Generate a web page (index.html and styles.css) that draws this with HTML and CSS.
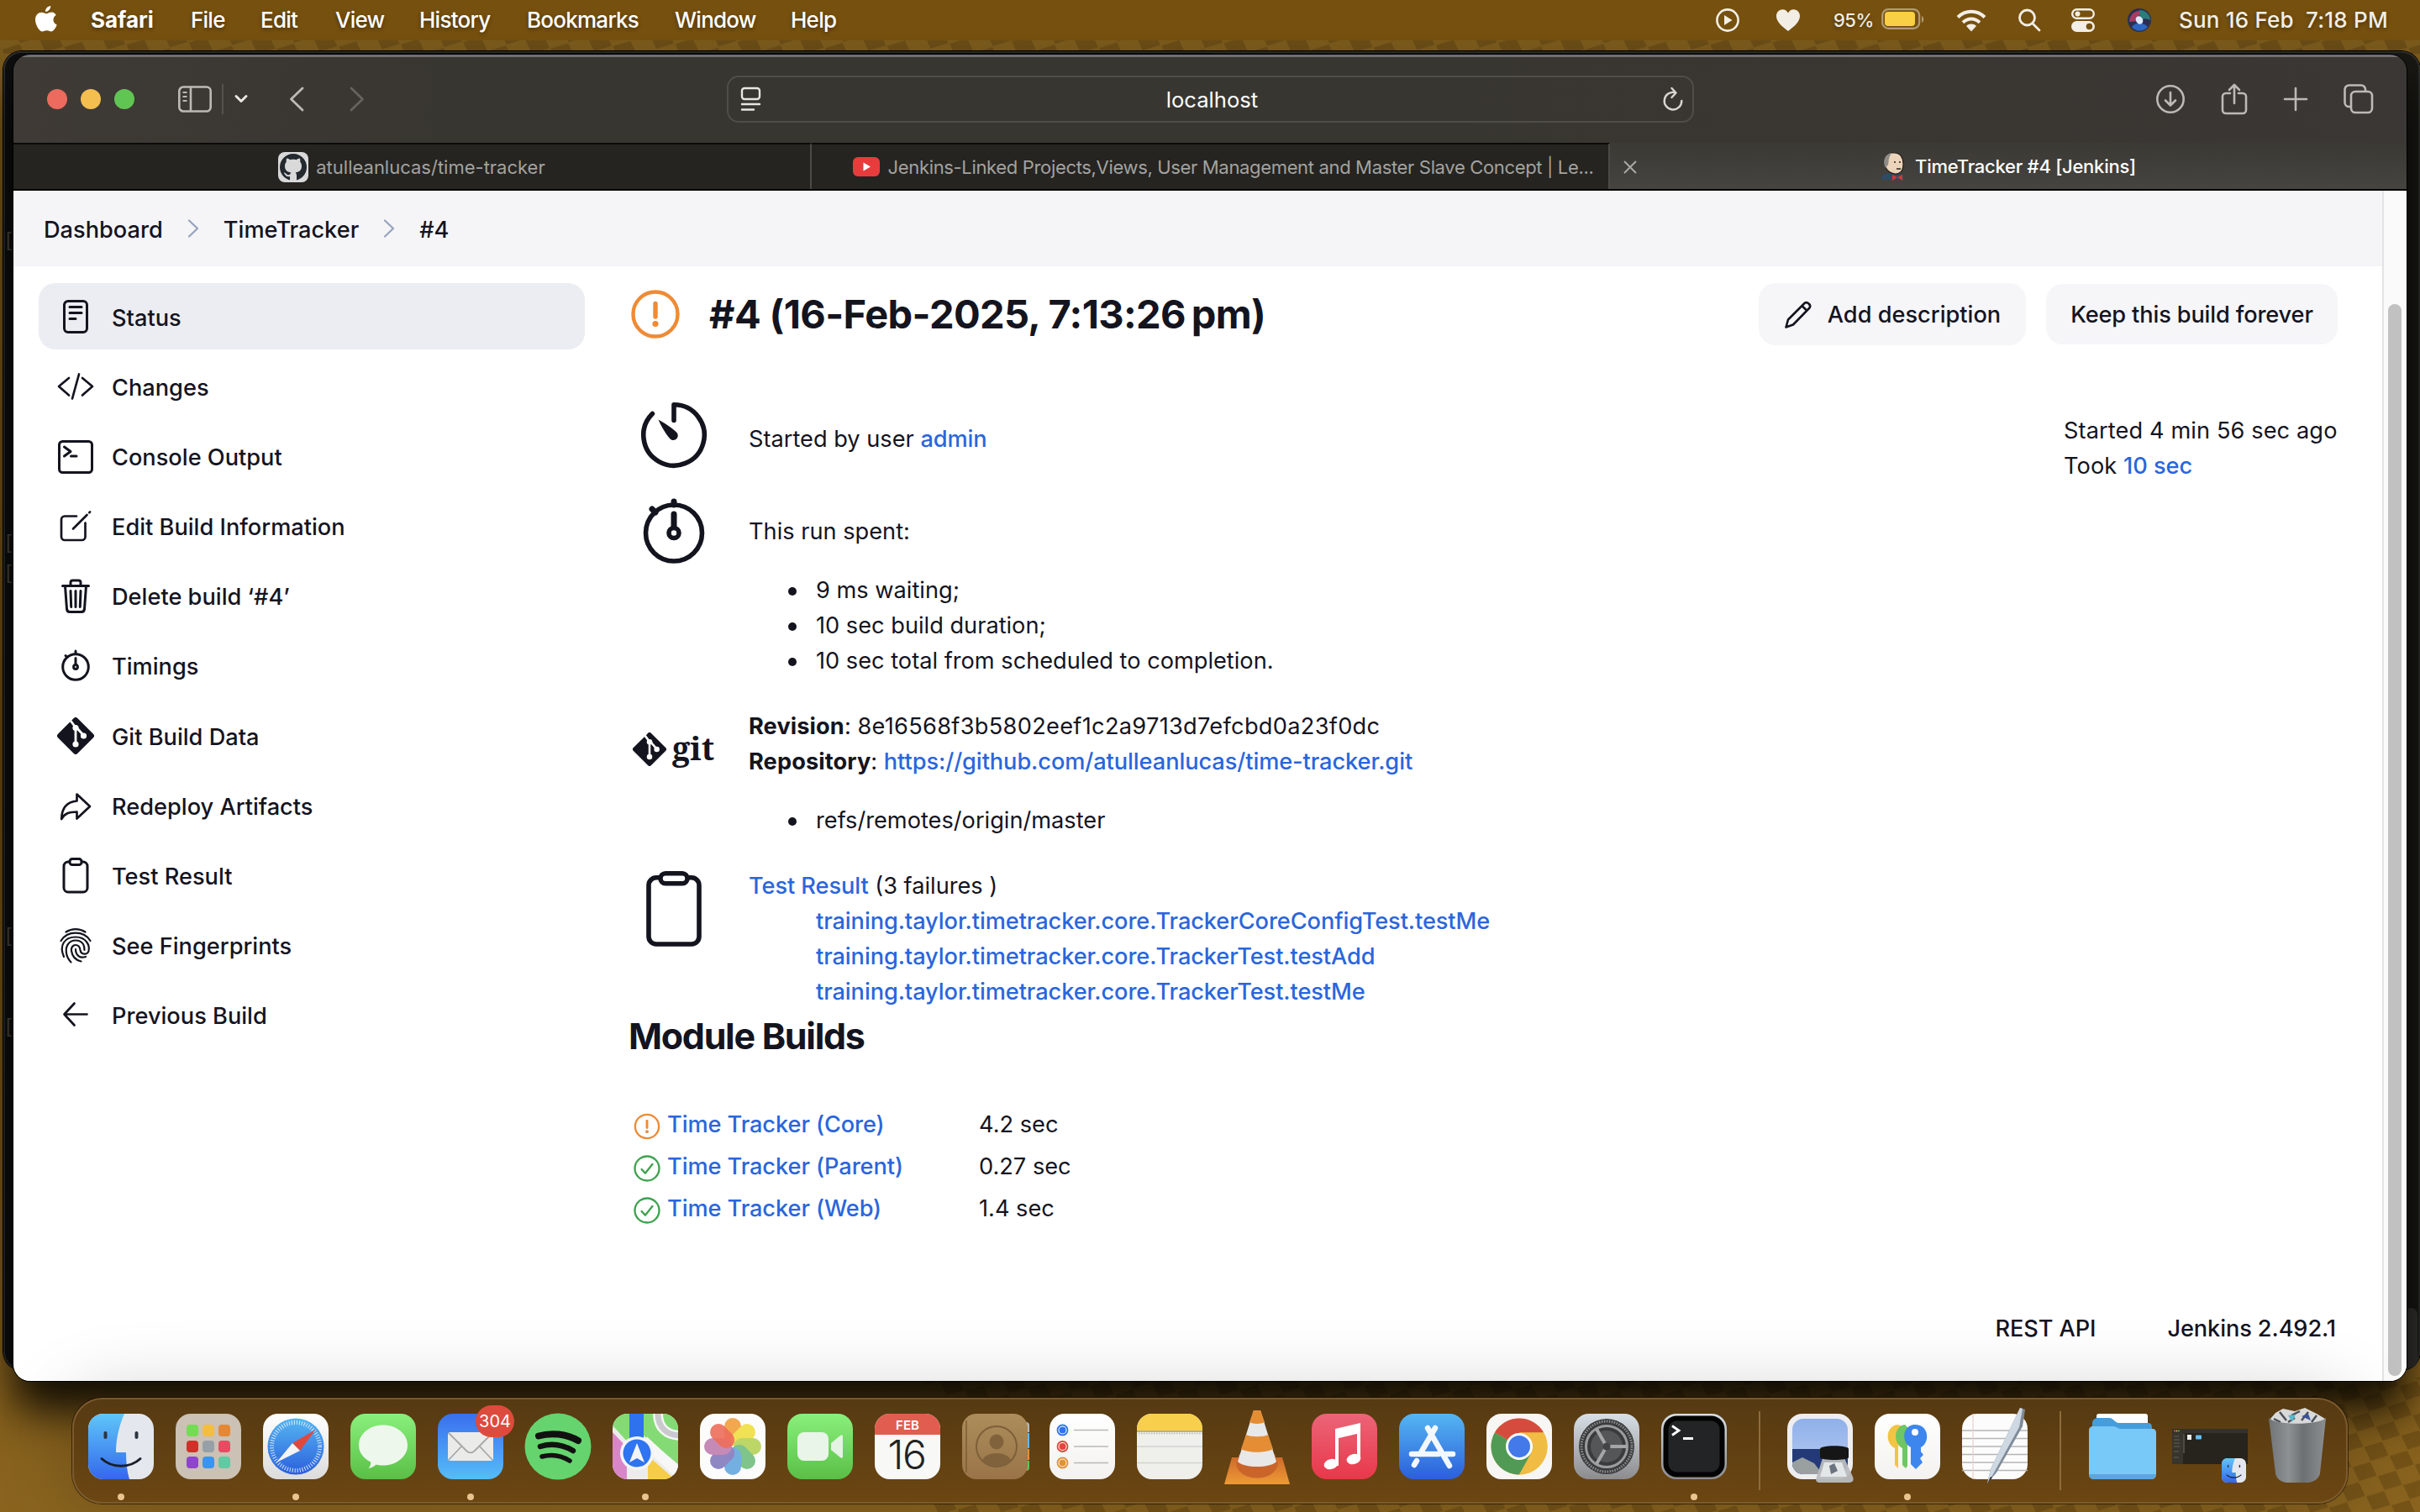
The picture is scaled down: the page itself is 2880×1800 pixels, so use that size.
FILE: index.html
```html
<!DOCTYPE html>
<html lang="en">
<head>
<meta charset="utf-8">
<title>TimeTracker #4 [Jenkins]</title>
<link rel="stylesheet" href="styles.css">
</head>
<body>
<svg class="wallpaper" viewBox="0 0 2880 1800" aria-hidden="true">
  <defs>
    <pattern id="check" width="46" height="38" patternUnits="userSpaceOnUse" patternTransform="rotate(-17) skewX(8)">
      <path d="M0 0h22v18H0zM23 19h22v18H23z" fill="#2d1c00" opacity=".22"/>
    </pattern>
    <linearGradient id="wall" x1="0" y1="0" x2="0" y2="1"><stop offset="0" stop-color="#7b5b1d"/><stop offset=".5" stop-color="#6a4a12"/><stop offset="1" stop-color="#8a641f"/></linearGradient>
    <linearGradient id="blue" x1="0" y1="0" x2="0" y2="1"><stop offset="0" stop-color="#5fc6f9"/><stop offset="1" stop-color="#3468ec"/></linearGradient>
    <linearGradient id="green" x1="0" y1="0" x2="0" y2="1"><stop offset="0" stop-color="#89f07c"/><stop offset="1" stop-color="#5abf46"/></linearGradient>
    <linearGradient id="white" x1="0" y1="0" x2="0" y2="1"><stop offset="0" stop-color="#ffffff"/><stop offset="1" stop-color="#dcdcdc"/></linearGradient>
    <linearGradient id="paper" x1="0" y1="0" x2="0" y2="1"><stop offset="0" stop-color="#ffffff"/><stop offset="1" stop-color="#f3f2f0"/></linearGradient>
    <linearGradient id="mail" x1="0" y1="0" x2="0" y2="1"><stop offset="0" stop-color="#3a6fee"/><stop offset="1" stop-color="#55bdf8"/></linearGradient>
    <linearGradient id="music" x1="0" y1="0" x2="0" y2="1"><stop offset="0" stop-color="#ec6478"/><stop offset="1" stop-color="#e8384a"/></linearGradient>
    <linearGradient id="store" x1="0" y1="0" x2="0" y2="1"><stop offset="0" stop-color="#55b6f2"/><stop offset="1" stop-color="#2b5fdc"/></linearGradient>
    <linearGradient id="steel" x1="0" y1="0" x2="0" y2="1"><stop offset="0" stop-color="#d7dfe6"/><stop offset="1" stop-color="#8c8c8e"/></linearGradient>
    <linearGradient id="bin" x1="0" y1="0" x2="1" y2="0"><stop offset="0" stop-color="#707477"/><stop offset=".35" stop-color="#8d9194"/><stop offset=".6" stop-color="#6c7073"/><stop offset="1" stop-color="#8b8f92"/></linearGradient>
    <linearGradient id="leather" x1="0" y1="0" x2="0" y2="1"><stop offset="0" stop-color="#ac8d5b"/><stop offset="1" stop-color="#9a7448"/></linearGradient>
    <linearGradient id="cone" x1="0" y1="0" x2="0" y2="1"><stop offset="0" stop-color="#cf6b2c"/><stop offset="1" stop-color="#ee9a36"/></linearGradient>
    <linearGradient id="sky" x1="0" y1="0" x2="0" y2="1"><stop offset="0" stop-color="#8fb0ea"/><stop offset="1" stop-color="#b9ccf1"/></linearGradient>
    <clipPath id="tile"><rect x="0" y="0" width="78" height="78" rx="18"/></clipPath>
    <symbol id="finder" viewBox="0 0 78 78">
      <g clip-path="url(#tile)"><path fill="#e4e8ee" d="M0 0h78v78H0z"/><path fill="url(#blue)" d="M0 0h43C36 16 33 32 33 46h12c0 12 1 22 4 32H0z"/></g>
      <path d="M20.500 23v5M57.500 23v5" stroke="#2b3440" stroke-width="4" stroke-linecap="round"/>
      <path d="M16 53.500c12 11.500 34 11.500 46 0" fill="none" stroke="#1b1f2a" stroke-width="3" stroke-linecap="round"/>
    </symbol>
    <symbol id="gitmark" viewBox="0 0 44 44">
      <path fill="#14141f" d="M19.800 1a3 3 0 0 1 4.400 0L43 19.800a3 3 0 0 1 0 4.400L24.200 43a3 3 0 0 1-4.400 0L1 24.200a3 3 0 0 1 0-4.400z"/>
      <path d="M16 4l6 8v21M23 12l8.500 9.500" fill="none" stroke="#fff" stroke-width="2.800"/>
      <circle cx="22" cy="12.500" r="3.600" fill="#fff"/><circle cx="22" cy="32" r="3.600" fill="#fff"/><circle cx="31.500" cy="22" r="3.600" fill="#fff"/>
    </symbol>
    <symbol id="okay" viewBox="0 0 30 30"><circle cx="15" cy="15" r="13.600" fill="none" stroke="#3fa24f" stroke-width="2.200"/><path d="M9 16l4 4.300 8-10" fill="none" stroke="#3fa24f" stroke-width="2.200" stroke-linecap="round" stroke-linejoin="round"/></symbol>
    <symbol id="warn" viewBox="0 0 60 60"><circle cx="30" cy="30" r="26.500" fill="none" stroke="#ee8b36" stroke-width="4.400"/><path d="M30 17.500v15.500" stroke="#ee8b36" stroke-width="5.400" stroke-linecap="round"/><circle cx="30" cy="41.500" r="3.600" fill="#ee8b36"/></symbol>
  </defs>
  <rect width="2880" height="1800" fill="url(#wall)"/>
  <rect y="48" width="2880" height="16" fill="url(#check)"/>
  <rect x="1100" y="1640" width="1780" height="160" fill="url(#check)"/>
</svg>

<header class="menubar">
  <nav class="menus">
    <svg width="28" height="32" viewBox="0 0 28 32"><path fill="#fff" d="M19.300 0c.3 3.600-3 7-6.300 7-.4-3.400 3-6.900 6.300-7zM25.700 11c-4.800 3-4 9.400 1 11.600-1.200 3.600-4 7.900-6.800 7.900-2 0-2.700-1.200-5.200-1.200s-3.300 1.200-5.200 1.200C5.700 30.500 1 22.500 1 16.500 1 10.800 4.700 7.700 8.500 7.700c2.400 0 4.300 1.600 5.800 1.600 1.400 0 3.600-1.700 6.500-1.700 1.900 0 3.800 1.200 4.900 3.400z"/></svg>
    <b>Safari</b><span>File</span><span>Edit</span><span>View</span><span>History</span><span>Bookmarks</span><span>Window</span><span>Help</span>
  </nav>
  <div class="extras">
    <svg width="30" height="30" viewBox="0 0 30 30"><circle cx="15" cy="15" r="12.600" fill="none" stroke="#f2eee6" stroke-width="2.600"/><path d="M11 9l9.500 6L11 21z" fill="#f2eee6"/></svg>
    <svg width="30" height="28" viewBox="0 0 30 28"><path fill="#f2eee6" d="M15 27C7 21 1 15.500 1 9c0-8 10.500-11 14-3.500C18.500-2 29 1 29 9c0 6.500-6 12-14 18z"/></svg>
    <span class="pct">95%</span>
    <svg width="52" height="26" viewBox="0 0 52 26"><rect x="1.200" y="1.200" width="44" height="22.600" rx="7" fill="none" stroke="#b09c78" stroke-width="2.200"/><rect x="4" y="4" width="36" height="17" rx="4" fill="#f8cf45"/><path d="M48 9c3 1.500 3 6.500 0 8z" fill="#b09c78"/></svg>
    <svg width="36" height="28" viewBox="0 0 36 28"><g fill="none" stroke="#f2eee6" stroke-width="4"><path d="M2 10.500c9-9 23-9 32 0"/><path d="M8 16.800c6-5.600 14-5.600 20 0"/></g><path fill="#f2eee6" d="M12 21c3.500-3.200 8.500-3.200 12 0l-6 6.500z"/></svg>
    <svg width="28" height="28" viewBox="0 0 28 28"><g fill="none" stroke="#f2eee6" stroke-width="2.800" stroke-linecap="round"><circle cx="11.500" cy="11" r="9"/><path d="M18 18l8 8"/></g></svg>
    <svg width="30" height="28" viewBox="0 0 30 28"><rect x="2.200" y="1.200" width="25.600" height="10.600" rx="5.300" fill="none" stroke="#f2eee6" stroke-width="2.400"/><circle cx="8.500" cy="6.500" r="3" fill="#f2eee6"/><rect x="1" y="15" width="28" height="13" rx="6.500" fill="#f2eee6"/><circle cx="22.500" cy="21.500" r="3.800" fill="#76500e"/></svg>
    <svg width="30" height="28" viewBox="0 0 30 28"><circle cx="15" cy="14" r="14" fill="#2a2f52"/><path d="M3 16C4 4 14 1 20 4c-8 3-6 10-5 11z" fill="#a63c62"/><path d="M15 2c8 0 13 6 13 12-4-2-8-3-12 1z" fill="#2d7c7c"/><path d="M6 22c4-6 14-6 19 0-5 6-14 6-19 0z" fill="#2c66c0"/><ellipse cx="15" cy="14" rx="4" ry="5" fill="#dfeafc" transform="rotate(-30 15 14)"/></svg>
    <span class="clock">Sun 16 Feb&nbsp; 7:18 PM</span>
  </div>
</header>

<main class="desktop">
  <div class="backwindow">
    <span class="frag f1">[</span><span class="frag f2">[</span><span class="frag f3">[</span><span class="frag f4">[</span><span class="frag f5">[</span>
    <div class="backthumb"></div>
  </div>

  <section class="window">
    <div class="toolbar">
      <div class="lights"><i class="red"></i><i class="amber"></i><i class="lime"></i></div>
      <div class="tools-left">
        <svg width="40" height="32" viewBox="0 0 40 32" fill="none" stroke="#bcbab6" stroke-width="2.600"><rect x="1.300" y="1.500" width="37.400" height="29" rx="5"/><path d="M15 1.500v29"/><path d="M5.500 8h5M5.500 13h5M5.500 18h5" stroke-width="2"/></svg>
        <i class="rule"></i>
        <svg width="18" height="12" viewBox="0 0 18 12" fill="none" stroke="#e8e6e2" stroke-width="3" stroke-linecap="round" stroke-linejoin="round"><path d="M3 2.500l6 6 6-6"/></svg>
        <svg class="back" width="18" height="30" viewBox="0 0 18 30" fill="none" stroke="#bcbab6" stroke-width="2.800" stroke-linecap="round" stroke-linejoin="round"><path d="M16 2L2.500 15 16 28"/></svg>
        <svg class="fwd" width="18" height="30" viewBox="0 0 18 30" fill="none" stroke="#65635f" stroke-width="2.800" stroke-linecap="round" stroke-linejoin="round"><path d="M2 2l13.500 13L2 28"/></svg>
      </div>
      <div class="url">
        <svg width="26" height="30" viewBox="0 0 26 30" fill="none" stroke="#e8e6e2" stroke-width="2.400" stroke-linecap="round"><rect x="2" y="2" width="21" height="13" rx="3"/><path d="M2 21h21M2 27.500h14"/></svg>
        <span>localhost</span>
        <svg width="26" height="30" viewBox="0 0 26 30" fill="none" stroke="#d8d6d2" stroke-width="2.400" stroke-linecap="round" stroke-linejoin="round"><path d="M15.500 7.200A10.300 10.300 0 1 0 23.300 17M11.500 2l5 5.500-5 5.500"/></svg>
      </div>
      <div class="tools-right">
        <svg width="36" height="36" viewBox="0 0 36 36" fill="none" stroke="#bcbab6" stroke-width="2.600" stroke-linecap="round" stroke-linejoin="round"><circle cx="18" cy="18" r="15.700"/><path d="M18 10v15.500M12 19.500l6 6 6-6"/></svg>
        <svg width="32" height="38" viewBox="0 0 32 38" fill="none" stroke="#bcbab6" stroke-width="2.600" stroke-linecap="round" stroke-linejoin="round"><path d="M11 12H6a4 4 0 0 0-4 4v16a4 4 0 0 0 4 4h20a4 4 0 0 0 4-4V16a4 4 0 0 0-4-4h-5M16 24V2M10 8l6-6 6 6"/></svg>
        <svg width="30" height="30" viewBox="0 0 30 30" stroke="#bcbab6" stroke-width="2.600" stroke-linecap="round"><path d="M15 2v26M2 15h26"/></svg>
        <svg width="36" height="36" viewBox="0 0 36 36" fill="none" stroke="#bcbab6" stroke-width="2.600" stroke-linejoin="round"><rect x="9" y="9" width="25" height="25" rx="5"/><path d="M9 27H6.500a5 5 0 0 1-5-5V6.500a5 5 0 0 1 5-5H21a5 5 0 0 1 5 5V9"/></svg>
      </div>
    </div>

    <div class="tabs">
      <div class="tab">
        <svg width="36" height="36" viewBox="0 0 36 36"><rect width="36" height="36" rx="8" fill="#d9d9da"/><circle cx="18" cy="18" r="16" fill="#24292f"/><path fill="#d9d9da" d="M14 34v-5c-4 1-5-1-6-2.500-.5-1-2-1.500-1-2 2-.3 3 2.500 4.500 2.700 1 .2 2 0 2.600-.4.200-1.200.7-2 1.300-2.400-5-.7-7.400-3-7.400-7.700 0-2 .6-3.600 1.800-4.900-.3-1.500-.2-3 .3-4.300 1.700 0 3.200 1 4.300 1.800 2.400-.6 4.800-.6 7.200 0 1.100-.8 2.600-1.800 4.300-1.800.5 1.300.6 2.800.3 4.300 1.200 1.300 1.800 3 1.800 4.900 0 4.700-2.400 7-7.400 7.700 1 .7 1.400 2 1.400 3.600v6z"/></svg>
        <span class="gh">atulleanlucas/time-tracker</span>
      </div>
      <div class="tab second">
        <svg width="32" height="23" viewBox="0 0 32 23"><rect width="32" height="23" rx="6" fill="#e83c3c"/><path d="M12.500 6.500l8.500 5-8.500 5z" fill="#fff"/></svg>
        <span class="yt">Jenkins-Linked Projects,Views, User Management and Master Slave Concept | Le...</span>
      </div>
      <div class="tab active">
        <svg class="close" width="16" height="16" viewBox="0 0 16 16" stroke="#aaa8a4" stroke-width="2"><path d="M1 1l14 14M15 1L1 15"/></svg>
        <svg width="30" height="34" viewBox="0 0 30 34"><path d="M1 33c-1-5 2-7 8-8h12c5 1 8 3 7 8z" fill="#2f4a63"/><path d="M6 18C2 8 8 0 16 1c8 0 11 6 11 13 0 9-4 12-9 12S8 23 6 18z" fill="#ebd4ba" stroke="#2b211c" stroke-width="1.200"/><path d="M6 19C1 9 7 1 14 1 9 5 10 11 9 15z" fill="#8f8b88"/><path d="M16 12h2M22 12h2M19 20h5" stroke="#2b211c" stroke-width="1.500"/><path d="M14 27l6 3-6 4zM26 27l-6 3 6 4z" fill="#d33833"/></svg>
        <b class="jk">TimeTracker #4 [Jenkins]</b>
      </div>
    </div>

    <div class="page">
      <div class="view">
        <nav class="crumbs">
          <span>Dashboard</span>
          <svg width="14" height="22" viewBox="0 0 14 22" fill="none" stroke="#99a5be" stroke-width="2.400" stroke-linecap="round" stroke-linejoin="round"><path d="M2 1.500L12 11 2 20.500"/></svg>
          <span>TimeTracker</span>
          <svg width="14" height="22" viewBox="0 0 14 22" fill="none" stroke="#99a5be" stroke-width="2.400" stroke-linecap="round" stroke-linejoin="round"><path d="M2 1.500L12 11 2 20.500"/></svg>
          <span>#4</span>
        </nav>
        <div class="columns">
          <aside class="side">
            <a class="item on"><svg class="ic" viewBox="0 0 44 44"><rect x="8.500" y="3.500" width="27" height="37" rx="4.500"/><path d="M15 10.500h14M15 17.500h14M15 24.500h7"/></svg><span>Status</span></a>
            <a class="item"><svg class="ic thin" viewBox="0 0 44 44"><path d="M14 12L2 22l12 10.500M30 12l12 10-12 10.500M26 7.500l-8 29"/></svg><span>Changes</span></a>
            <a class="item"><svg class="ic" viewBox="0 0 44 44"><rect x="2.500" y="4.500" width="39" height="37" rx="4"/><path d="M8.500 11l7.500 5.500-7.500 5.500M16.500 22h6.500"/></svg><span>Console Output</span></a>
            <a class="item"><svg class="ic thin" viewBox="0 0 44 44"><path d="M23 10.500H9a4 4 0 0 0-4 4V35a4 4 0 0 0 4 4h20.500a4 4 0 0 0 4-4V18.500M19 25.500L35.500 9M38.300 6.200l.8-.8"/></svg><span>Edit Build Information</span></a>
            <a class="item"><svg class="ic" viewBox="0 0 44 44"><path d="M6.500 10.500h31M9.500 10.500l2 27.500c.2 2 1.500 3.500 3.500 3.500h14c2 0 3.300-1.500 3.500-3.500l2-27.500M16 10V6.500c0-1.500 1-2.500 2.500-2.500h7c1.500 0 2.500 1 2.500 2.500V10M16 16.500l.7 19M22 16.500v19M28 16.500l-.7 19"/></svg><span>Delete build ‘#4’</span></a>
            <a class="item"><svg class="ic" viewBox="0 0 44 44"><circle cx="22" cy="24" r="15.300"/><path d="M22 13.500v7.500M22 5v3M10 10.500l2 2"/><circle cx="22" cy="24" r="2.400"/></svg><span>Timings</span></a>
            <a class="item"><svg class="ic solid" viewBox="0 0 44 44"><use href="#gitmark"/></svg><span>Git Build Data</span></a>
            <a class="item"><svg class="ic thin" viewBox="0 0 44 44"><path d="M23.500 8.500L39 23 23.500 37.500v-8C14 29.500 9 31.500 5.200 38 5.500 25 12 17.500 23.500 16.500z"/></svg><span>Redeploy Artifacts</span></a>
            <a class="item"><svg class="ic" viewBox="0 0 44 44"><path d="M14.500 6H13a5 5 0 0 0-5 5v26a5 5 0 0 0 5 5h18a5 5 0 0 0 5-5V11a5 5 0 0 0-5-5h-1.500"/><rect x="15" y="2.500" width="14" height="7" rx="3"/></svg><span>Test Result</span></a>
            <a class="item"><svg class="ic fine" viewBox="0 0 44 44"><path d="M10.500 6.500c7-4.500 16-4.500 23 0M4.500 17C12 4.500 32 4.500 39.500 17M8 36C2 22 9 12.500 22 12.500S39 23 37.500 29c-1.500 5-9 5-10-1-.5-4-2-6-5.500-6s-5.500 3-5 7c1 7 5 11 11.500 12.500M16.500 42.500C9 35 10 25 13 21c4-6 14-6 18 0 1.500 2.500 1.500 4 1.500 7M34 36c-7 2.500-12-2-12-9"/></svg><span>See Fingerprints</span></a>
            <a class="item"><svg class="ic thin" viewBox="0 0 44 44"><path d="M20.500 8.500L8.500 21.500l12 13M8.500 21.500H35.500"/></svg><span>Previous Build</span></a>
          </aside>

          <article class="main">
            <div class="headline">
              <svg width="60" height="60"><use href="#warn"/></svg>
              <h1>#4 (16-Feb-2025, 7:13:26&#8239;pm)</h1>
              <button class="btn edit"><svg width="34" height="34" viewBox="0 0 34 34" fill="none" stroke="#14141f" stroke-width="2.600" stroke-linejoin="round"><path d="M2.500 31.500l2.500-9L24.500 3c3-2.500 8.500 2 6 5.500L11 28.500zM21.500 6l6.500 6.500"/></svg><span>Add description</span></button>
              <button class="btn keep"><span>Keep this build forever</span></button>
            </div>

            <div class="row cause">
              <svg width="80" height="80" viewBox="0 0 80 80" fill="none" stroke="#14141f" stroke-width="5.600" stroke-linecap="round" stroke-linejoin="round"><path d="M14.400 14.400A36.200 36.200 0 1 0 40 3.800V22.500"/><path fill="#14141f" stroke="none" d="M21.500 21.500c8 4.500 16.500 10 22 15.500 4 5.500-2.500 12-8 7.500-5-5.500-10.500-14.500-14-23z"/></svg>
              <p>Started by user <a>admin</a></p>
              <p class="when">Started 4 min 56 sec ago<br>Took <a>10 sec</a></p>
            </div>
            <div class="row">
              <svg width="80" height="80" viewBox="0 0 80 80" fill="none" stroke="#14141f" stroke-width="5.600" stroke-linecap="round"><circle cx="40" cy="42.500" r="33.500"/><path d="M40 20v15M40 5v4M14 14l4 4" stroke-width="7"/><circle cx="40" cy="42.500" r="6"/></svg>
              <div><p>This run spent:</p>
                <ul><li>9 ms waiting;</li><li>10 sec build duration;</li><li>10 sec total from scheduled to completion.</li></ul></div>
            </div>
            <div class="row">
              <div class="gitlogo"><svg width="40" height="40"><use href="#gitmark"/></svg><b>git</b></div>
              <div><p><b class="key">Revision</b>: <span class="hash">8e16568f3b5802eef1c2a9713d7efcbd0a23f0dc</span></p>
                <p><b class="key">Repository</b>: <a>https://github.com/atulleanlucas/time-tracker.git</a></p>
                <ul><li>refs/remotes/origin/master</li></ul></div>
            </div>
            <div class="row testrow">
              <svg width="68" height="92" viewBox="0 0 68 92" fill="none" stroke="#14141f" stroke-width="5.600"><path d="M17 8.800H13a9 9 0 0 0-9 9V79a9 9 0 0 0 9 9h42a9 9 0 0 0 9-9V17.800a9 9 0 0 0-9-9h-4"/><rect x="18" y="3.800" width="32" height="12" rx="6"/></svg>
              <div><p><a>Test Result</a> (3 failures )</p>
                <p class="fails"><a>training.taylor.timetracker.core.TrackerCoreConfigTest.testMe</a><br><a>training.taylor.timetracker.core.TrackerTest.testAdd</a><br><a>training.taylor.timetracker.core.TrackerTest.testMe</a></p></div>
            </div>

            <h2>Module Builds</h2>
            <div class="modules">
              <svg width="32" height="32"><use href="#warn"/></svg><a>Time Tracker (Core)</a><span>4.2 sec</span>
              <svg width="32" height="32"><use href="#okay"/></svg><a>Time Tracker (Parent)</a><span>0.27 sec</span>
              <svg width="32" height="32"><use href="#okay"/></svg><a>Time Tracker (Web)</a><span>1.4 sec</span>
            </div>
            <footer><span>REST API</span><span>Jenkins 2.492.1</span></footer>
          </article>
        </div>
      </div>
      <div class="scroll"><i></i></div>
    </div>
  </section>
</main>

<div class="dock">
  <div class="app run"><svg viewBox="0 0 78 78"><use href="#finder"/></svg></div>
  <div class="app"><svg viewBox="0 0 78 78"><rect width="78" height="78" rx="18" fill="#cbc1b4"/><g><rect x="13" y="13" width="14" height="14" rx="4" fill="#74dc53"/><rect x="32" y="13" width="14" height="14" rx="4" fill="#f2bd42"/><rect x="51" y="13" width="14" height="14" rx="4" fill="#e58836"/><rect x="13" y="32" width="14" height="14" rx="4" fill="#cf3128"/><rect x="32" y="32" width="14" height="14" rx="4" fill="#96a0a6"/><rect x="51" y="32" width="14" height="14" rx="4" fill="#e94a62"/><rect x="13" y="51" width="14" height="14" rx="4" fill="#8f44cc"/><rect x="32" y="51" width="14" height="14" rx="4" fill="#3d93f0"/><rect x="51" y="51" width="14" height="14" rx="4" fill="#62c9a2"/></g></svg></div>
  <div class="app run"><svg viewBox="0 0 78 78"><rect width="78" height="78" rx="18" fill="url(#white)"/><circle cx="39" cy="39" r="33.500" fill="url(#store)"/><circle cx="39" cy="39" r="28.500" fill="none" stroke="#d6e8fb" stroke-width="5" stroke-dasharray="1 2"/><path d="M62.500 19L44 44l-9-9z" fill="#e0483d"/><path d="M16 58l19-23 9 9z" fill="#f4f4f4"/></svg></div>
  <div class="app"><svg viewBox="0 0 78 78"><rect width="78" height="78" rx="18" fill="url(#green)"/><path fill="#eef7ec" d="M39 13.500c16 0 29 10.500 29 24s-13 24-29 24c-3 0-6-.3-8.500-1-2 2-5 4-9 4.500 2-2.500 3-5 2.600-7.500C15.500 53 10 46 10 37.500c0-13.500 13-24 29-24z"/></svg></div>
  <div class="app run"><svg viewBox="0 0 78 78"><rect width="78" height="78" rx="18" fill="url(#mail)"/><rect x="12" y="22" width="54" height="34" rx="3" fill="#ebebea"/><path d="M13 23l21 21c3 3 7 3 10 0l21-21M13 55l15-16M65 55L50 39" fill="none" stroke="#a8a8a8" stroke-width="1.800"/></svg><b class="badge">304</b></div>
  <div class="app"><svg viewBox="0 0 78 78"><circle cx="39" cy="39" r="39.500" fill="#65d46e"/><g fill="none" stroke="#111" stroke-linecap="round"><path d="M16 26.500c15-4.500 33-2.500 47 5.500" stroke-width="8"/><path d="M18 39c13-4 27-2 39 5" stroke-width="6.500"/><path d="M20 51c11-3 22-2 33 5" stroke-width="5.500"/></g></svg></div>
  <div class="app run"><svg viewBox="0 0 78 78"><g clip-path="url(#tile)"><path fill="#ececec" d="M0 0h78v78H0z"/><path fill="#84db75" d="M0 0h20v36L0 14zM37 0h41v60L37 26z"/><path fill="#d986c9" d="M0 22l17 18v38H0z"/><path fill="#f5cd47" d="M42 78V50l32 28z"/><path d="M37 32l41 38M54 0c0 16 10 26 28 26" stroke="#f7f7f7" stroke-width="12" fill="none"/><path d="M54 0c0 16 10 26 28 26" stroke="#c9c9ce" stroke-width="7" fill="none"/><path fill="#2f72ee" d="M20 0h17v46H20z"/></g><circle cx="29" cy="47" r="20" fill="#f3f5f8"/><circle cx="29" cy="47" r="16.500" fill="#2f74f0"/><path d="M29 35l9 23-9-5-9 5z" fill="#f5f5f5"/></svg></div>
  <div class="app"><svg viewBox="0 0 78 78"><rect width="78" height="78" rx="18" fill="#fcfcfc"/><g opacity=".88"><rect x="29" y="5" width="20" height="33" rx="10" fill="#f19d38"/><rect x="29" y="5" width="20" height="33" rx="10" fill="#f0de3f" transform="rotate(45 39 39)"/><rect x="29" y="5" width="20" height="33" rx="10" fill="#b5d154" transform="rotate(90 39 39)"/><rect x="29" y="5" width="20" height="33" rx="10" fill="#6dbd7c" transform="rotate(135 39 39)"/><rect x="29" y="5" width="20" height="33" rx="10" fill="#62a5de" transform="rotate(180 39 39)"/><rect x="29" y="5" width="20" height="33" rx="10" fill="#8078bd" transform="rotate(225 39 39)"/><rect x="29" y="5" width="20" height="33" rx="10" fill="#bf7bae" transform="rotate(270 39 39)"/><rect x="29" y="5" width="20" height="33" rx="10" fill="#ec5a45" transform="rotate(315 39 39)" opacity=".9"/></g></svg></div>
  <div class="app"><svg viewBox="0 0 78 78"><rect width="78" height="78" rx="18" fill="url(#green)"/><rect x="12" y="22" width="37" height="34" rx="8" fill="#e9f5e8"/><path d="M52 35l11-9c2-1.500 3-.5 3 1v24c0 1.500-1 2.500-3 1l-11-9z" fill="#e4f3e2"/></svg></div>
  <div class="app"><svg viewBox="0 0 78 78"><g clip-path="url(#tile)"><path fill="#f8f8f7" d="M0 0h78v78H0z"/><path fill="#e05d50" d="M0 0h78v25H0z"/></g><text x="39" y="18.500" text-anchor="middle" font-size="15" font-weight="600" fill="#fff">FEB</text><text x="38" y="66" text-anchor="middle" font-size="48" font-weight="300" letter-spacing="-1.500" fill="#222">16</text></svg></div>
  <div class="app"><svg viewBox="0 0 78 78"><path d="M74 10h2a4 4 0 0 1 4 4v8h-6z" fill="#b8b8b8"/><path d="M74 23h6v18h-6z" fill="#62b7ea"/><path d="M74 42h6v13h-6z" fill="#e28f36"/><path d="M74 56h6v8a4 4 0 0 1-4 4h-2z" fill="#62c15a"/><rect width="78" height="78" rx="17" fill="url(#leather)"/><path d="M5 8v62" stroke="#7d5c32" stroke-width="1.500"/><circle cx="41" cy="39" r="24" fill="none" stroke="#7d5f39" stroke-width="2"/><ellipse cx="41" cy="33.500" rx="8.500" ry="9" fill="#80623c"/><path d="M24 56c3-12 31-12 34 0-8 9-26 9-34 0z" fill="#80623c"/></svg></div>
  <div class="app"><svg viewBox="0 0 78 78"><rect width="78" height="78" rx="18" fill="url(#paper)"/><path d="M29 19.500h41M29 39h41M29 58.500h41" stroke="#b9b9b9" stroke-width="1.600"/><g stroke-width="1.800" fill="none"><circle cx="15.500" cy="19.500" r="6" stroke="#2f75ea"/><circle cx="15.500" cy="39" r="6" stroke="#e0483c"/><circle cx="15.500" cy="58.500" r="6" stroke="#e29235"/></g><circle cx="15.500" cy="19.500" r="4" fill="#2f75ea"/><circle cx="15.500" cy="39" r="4" fill="#e0483c"/><circle cx="15.500" cy="58.500" r="4" fill="#e29235"/></svg></div>
  <div class="app"><svg viewBox="0 0 78 78"><g clip-path="url(#tile)"><path fill="#efefec" d="M0 0h78v78H0z"/><path fill="#f7cf4c" d="M0 0h78v20H0z"/><path d="M0 21h78" stroke="#a89a6a" stroke-width="1.500"/><path d="M2 23.500h76" stroke="#b5b5b5" stroke-width="1.600" stroke-dasharray="1.500 1.500"/><path d="M0 39h78M0 58.500h78" stroke="#d2d2d0" stroke-width="1.500"/></g></svg></div>
  <div class="app"><svg viewBox="0 0 78 78"><path d="M9 52h60l9 32H0z" fill="url(#cone)"/><path d="M14 60c4 22 46 22 50 0l-4-12H18z" fill="#c9642b"/><path d="M35-4h8l19 61c-8 8-38 8-46 0z" fill="#e8e8e9"/><path d="M35-4h8l5 14c-4 2.500-14 2.500-18 0zM26 25c6 3 20 3 26 0l6 17c-9 5-29 5-38 0z" fill="#e58d34"/></svg></div>
  <div class="app"><svg viewBox="0 0 78 78"><rect width="78" height="78" rx="18" fill="url(#music)"/><path d="M30 62V22l26-7v40" fill="none" stroke="#fff" stroke-width="4"/><path d="M28 18l30-7v12l-30 7z" fill="#fff"/><ellipse cx="23" cy="60" rx="8.500" ry="6" fill="#fff" transform="rotate(-15 23 60)"/><ellipse cx="50" cy="54" rx="8.500" ry="6" fill="#fff" transform="rotate(-15 50 54)"/></svg></div>
  <div class="app"><svg viewBox="0 0 78 78"><rect width="78" height="78" rx="18" fill="url(#store)"/><g stroke="#f2f8fe" stroke-width="6.500" stroke-linecap="round"><path d="M43 17L25 48M34 17l26 45M15 48h32M56 48h8M21 56l-3 5"/></g></svg></div>
  <div class="app"><svg viewBox="0 0 78 78"><rect width="78" height="78" rx="18" fill="#f7f6f4"/><circle cx="39" cy="39" r="33.500" fill="#f0bc43"/><path d="M39 39L10 22.200A33.500 33.500 0 0 1 68 22.200z" fill="#d54c3f"/><path d="M39 39L10 22.200A33.500 33.500 0 0 0 39 72.500L53 47z" fill="#519a55"/><path d="M39 22.200h29A33.500 33.500 0 0 1 39 72.500L53.500 47.500z" fill="#f0bc43"/><circle cx="39" cy="39" r="16" fill="#fff"/><circle cx="39" cy="39" r="13" fill="#4379e8"/></svg></div>
  <div class="app"><svg viewBox="0 0 78 78"><rect width="78" height="78" rx="18" fill="url(#steel)"/><circle cx="39" cy="39" r="33" fill="#3a3b3c"/><circle cx="39" cy="39" r="30" fill="none" stroke="#8d8e8f" stroke-width="3" stroke-dasharray="1.500 1.500"/><circle cx="39" cy="39" r="24.500" fill="none" stroke="#9b9c9d" stroke-width="3"/><circle cx="39" cy="39" r="19" fill="#555657"/><path d="M39 39h24M39 39L27 18.200M39 39L27 59.800" stroke="#a5a6a7" stroke-width="4"/><circle cx="39" cy="39" r="4.500" fill="#444"/></svg></div>
  <div class="app run"><svg viewBox="0 0 78 78"><rect width="78" height="78" rx="18" fill="url(#steel)"/><rect x="2.500" y="2.500" width="73" height="73" rx="16" fill="#030303"/><rect x="8.500" y="8.500" width="61" height="61" rx="10" fill="#232425"/><path d="M13 14.500l8 5.500-8 5.500M26 29.500h12" fill="none" stroke="#fff" stroke-width="2.800"/></svg></div>
  <i class="split"></i>
  <div class="app"><svg viewBox="0 0 78 78"><rect width="78" height="78" rx="18" fill="#eeeef0"/><rect x="6" y="6" width="66" height="66" rx="13" fill="url(#sky)"/><path d="M6 42h66v17a13 13 0 0 1-13 13H19A13 13 0 0 1 6 59z" fill="#243a78"/><path d="M6 58l12-6 14 7 10 13H19A13 13 0 0 1 6 60z" fill="#9aa0a0"/><path d="M42 53h26l10 22c2 5-1 7-5 7H39c-4 0-6-2-4-7z" fill="#b9bdbf" opacity=".95"/><path d="M44 58h21l6 17H39z" fill="#e4e7e8"/><path d="M50 62l6-3 4 9-8 4z" fill="#6b7480"/><path d="M39 42c0-5 34-5 34 0v10c0 4-34 4-34 0z" fill="#161616"/></svg></div>
  <div class="app run"><svg viewBox="0 0 78 78"><rect width="78" height="78" rx="18" fill="url(#paper)"/><path d="M27 13c-14 2-15 22-3 28v20l4 4V40l3-26z" fill="#f3c443"/><path d="M36 13c-14 2-14 22-3 28v20l4 4 2-3V16z" fill="#6fc662"/><path d="M48 13c17 0 18 21 7 27v5l3 4-4 4 3 5-8 8-6-6V40c-12-6-10-27 5-27z" fill="#3c86ee"/><circle cx="48" cy="22" r="4" fill="#fff"/></svg></div>
  <div class="app"><svg viewBox="0 0 78 78"><rect width="78" height="78" rx="18" fill="#fcfcfc"/><path d="M0 20h78M0 29.500h78M0 39h78M0 48.500h78M0 58h78M0 67.500h78" stroke="#b5b5b8" stroke-width="1.500"/><path d="M13 0v78" stroke="#ecd0d0" stroke-width="1.200"/><path d="M69-7l6 2-3 20L41 70l-11 13 4-17z" fill="#7f8b9a"/><path d="M69-7l3 1-4 22L37 72l-7 11 4-17z" fill="#cdd8e2"/><path d="M30 83l4-8 2 1z" fill="#333"/></svg></div>
  <i class="split wide"></i>
  <div class="app"><svg viewBox="0 0 78 78"><rect x="8" y="0" width="61" height="30" rx="3" fill="#fff"/><path d="M3 12c0-5 3-7 7-7h13c6 0 6 6 12 6h34c4 0 5 2 5 6v20H3z" fill="#459ddb"/><path d="M-1 20c0-3 2-5 5-5h25l7 3h38c4 0 5 2 5 5v48c0 4-2 6-6 6H4c-4 0-5-3-5-6z" fill="#78c8f8"/><path d="M-1 72c0 4 2 6 6 6h68c4 0 6-2 6-6z" fill="#5ba7dc"/></svg></div>
  <div class="app"><svg viewBox="0 0 78 78"><rect x="-6" y="18" width="90" height="42" fill="#27231d"/><path d="M-6 18h90v5H-6z" fill="#35312b"/><path d="M-6 23H7v37H-6z" fill="#38342e"/><path d="M8 24v23" stroke="#77736d"/><path d="M-4 27h6M-4 31h7M-4 35h7M-4 39h7M-4 45h6M-4 52h6" stroke="#625e58" stroke-width="1.200"/><circle cx="-3" cy="20.500" r=".9" fill="#e66"/><circle cx="-.5" cy="20.500" r=".9" fill="#eb5"/><circle cx="2" cy="20.500" r=".9" fill="#6b5"/><rect x="12" y="25" width="5" height="6" fill="#eee"/><rect x="22" y="25.500" width="7" height="5" rx="1" fill="#62bdf0"/><use href="#finder" x="53" y="53" width="29" height="29"/></svg></div>
  <div class="app"><svg viewBox="0 0 78 78"><path d="M7 6l6-7 9-5 14 3 12-4 14 7 10 6-6 12H12z" fill="#d9d9d9"/><path d="M18-2l8 10M32 2l10-5M44 8l8-10M28 10l8-5M56 10l6-8M11 6l8 4" stroke="#4b5058" stroke-width="2.500"/><path d="M28 2l9-1-4 9z" fill="#56b8c9"/><path d="M44 3l8-3 3 8z" fill="#39539a"/><path d="M5 5c8 9 60 9 68 0l-7 66c-1 6-7 10-14 11H26c-7-1-12-5-13-11z" fill="url(#bin)"/></svg></div>
</div>
</body>
</html>
```

FILE: styles.css
```css
* { box-sizing: border-box; }
body {
  margin: 0;
  width: 2880px;
  height: 1800px;
  overflow: hidden;
  position: relative;
  font-family: Inter, "Liberation Sans", sans-serif;
  font-size: 27.2px;
  color: #14141f;
  background: #76500e;
}
svg { display: block; flex: none; overflow: visible; }
p, ul, h1, h2 { margin: 0; }
.wallpaper { position: absolute; inset: 0; width: 2880px; height: 1800px; }

/* Menu bar */
.menubar {
  position: relative;
  height: 48px;
  display: flex;
  justify-content: space-between;
  background: #76500e;
  color: #fff;
  font-size: 26px;
  font-weight: 500;
  line-height: 47px;
  text-shadow: 0 2px 5px rgba(0, 0, 0, .4);
}
.menus {
  display: grid;
  grid-template-columns: 67px 119px 83px 89px 100px 128px 176px 138px auto;
  padding-left: 41px;
  letter-spacing: -.75px;
}
.menus b { letter-spacing: 0; }
.menus svg { margin-top: 7px; }
.extras {
  display: grid;
  grid-template-columns: 72px 69px 57px 89px 73px 63px 67px 62px 249px;
  padding-right: 38px;
  color: #f2eee6;
}
.extras svg { margin-top: 10px; }
.extras svg:first-child { margin-top: 9px; }
.extras .pct { font-size: 22px; line-height: 49px; letter-spacing: -.5px; }
.clock { letter-spacing: .2px; white-space: nowrap; }

/* Windows */
.desktop { position: absolute; inset: 48px 0 0 0; }
.backwindow {
  position: absolute;
  left: 4px;
  top: 13px;
  width: 2876px;
  height: 1570px;
  border: 2px solid #2b2b2a;
  border-radius: 22px;
  background: linear-gradient(90deg, #0e0e0e 50%, #181713 50%);
  box-shadow: 0 0 0 1px #000;
}
.frag { position: absolute; left: 1px; font: 24px/28px "Liberation Sans", sans-serif; color: #4a4a4a; }
.f1 { top: 208px; } .f2 { top: 568px; } .f3 { top: 604px; } .f4 { top: 1036px; } .f5 { top: 1144px; }
.backthumb { position: absolute; right: 1px; top: 1494px; width: 16px; height: 71px; border-radius: 8px; background: #333230; }
.window {
  position: absolute;
  left: 16px;
  top: 17px;
  width: 2848px;
  height: 1579px;
  display: flex;
  flex-direction: column;
  border-radius: 20px;
  overflow: hidden;
  background: #383631;
  z-index: 2;
}
.desktop::before {
  content: "";
  position: absolute;
  left: 16px;
  top: 17px;
  width: 2848px;
  height: 1579px;
  border-radius: 20px;
  box-shadow: 0 0 0 1px #000, 0 36px 50px 0 rgba(0, 0, 0, .85);
  z-index: 1;
}

.toolbar {
  height: 105px;
  flex: none;
  display: flex;
  align-items: center;
  background: linear-gradient(90deg, #3f3a36, #383631 18%, #383631 60%, #3b3734);
  border-top: 3px solid #72706e;
  padding: 0 39px 2px 40px;
}
.lights { display: flex; gap: 16px; width: 156px; flex: none; }
.lights i { width: 24px; height: 24px; border-radius: 50%; background: #ec6a5e; }
.lights .amber { background: #f4bf4f; }
.lights .lime { background: #61c554; }
.tools-left { display: flex; align-items: center; width: 653px; flex: none; }
.rule { width: 2px; height: 36px; background: #55524e; margin: 0 12px; }
.back { margin-left: 48px; }
.fwd { margin-left: 54px; }
.url {
  width: 1151px;
  height: 56px;
  flex: none;
  border: 2px solid #4f4d49;
  border-radius: 14px;
  display: flex;
  align-items: center;
  justify-content: space-between;
  padding: 0 10px 0 14px;
  color: #fff;
  font-size: 25.6px;
}
.tools-right { display: flex; align-items: center; justify-content: space-between; margin-left: auto; width: 260px; }

.tabs { height: 57px; flex: none; display: grid; grid-template-columns: 950px 950px 948px; border-bottom: 2px solid #000; background: #3d3b36; }
.tab {
  position: relative;
  display: flex;
  align-items: center;
  justify-content: center;
  gap: 9px;
  background: #252421;
  border-top: 2px solid #0a0a09;
  border-right: 2px solid #4c4a46;
  color: #a3a29f;
  font-size: 22px;
  white-space: nowrap;
}
.second { gap: 10px; padding-left: 31px; }
.yt { letter-spacing: -.34px; }
.tab.active { background: linear-gradient(#3b3934, #464440); border: 0; color: #fff; gap: 11px; }
.tab.active b { font-weight: 550; letter-spacing: -.25px; }
.close { position: absolute; left: 16px; top: 21px; }

/* Jenkins page */
.page { flex: 1; display: flex; background: #fff; }
.view { width: 2819px; }
.scroll { width: 29px; border-left: 2px solid #e4e4e4; background: #fafafa; padding: 135px 0 6px 5px; }
.scroll i { display: block; width: 16px; height: 100%; border-radius: 8px; background: #c1c1c1; }
.crumbs { height: 90px; background: #f5f5f8; display: flex; align-items: center; padding: 2px 0 0 36px; font-weight: 500; }
.crumbs svg { margin: -2px 29px 0; }
.columns { display: flex; padding: 20px 0 0 30px; }
.side { width: 650px; display: flex; flex-direction: column; gap: 4.2px; flex: none; }
.item { height: 79px; display: flex; align-items: center; gap: 21px; padding-left: 22px; border-radius: 20px; font-weight: 500; }
.item.on { background: #ecedf2; }
.item span { padding-top: 3px; }
.ic { width: 44px; height: 44px; fill: none; stroke: #14141f; stroke-width: 3; stroke-linecap: round; stroke-linejoin: round; }
.thin { stroke-width: 2.700; }
.fine { stroke-width: 2.200; }
.solid { stroke: none; }

.main { margin-left: 54px; width: 2032px; line-height: 42px; }
a { color: #2a66dc; font-weight: 500; }
.main a { letter-spacing: -.08px; }
.item { color: inherit; }
.headline { display: flex; align-items: center; height: 74px; }
h1 { font-size: 47px; font-weight: 650; letter-spacing: -.62px; margin-left: 34px; flex: 1; white-space: nowrap; }
.btn {
  height: 74px;
  border: 0;
  border-radius: 20px;
  background: #f6f6f9;
  font: inherit;
  font-weight: 500;
  color: inherit;
  display: flex;
  align-items: center;
  justify-content: center;
  gap: 18px;
  white-space: nowrap;
  padding: 1px 0 0;
}
.edit { width: 318px; }
.keep { width: 347px; height: 72px; margin-left: 24px; letter-spacing: -.15px; }
.row { display: grid; grid-template-columns: 141px 1fr auto; padding-top: 30px; margin-bottom: 6px; }
.row > svg { margin: -20px 0 -100px 12px; }
.cause { margin: 59px 0 0; height: 112px; padding-top: 32px; }
.cause > svg { margin-top: -24px; }
.cause .when { margin-top: -10px; width: 326px; white-space: nowrap; letter-spacing: .1px; }
ul { margin: 28px 0 0; padding-left: 80px; list-style: none; }
li { position: relative; }
li::before { content: ""; position: absolute; left: -33px; top: 17px; width: 10px; height: 10px; border-radius: 50%; background: #14141f; }
.key { font-weight: 650; letter-spacing: .1px; }
.hash { letter-spacing: .3px; }
.gitlogo { display: flex; align-items: center; gap: 7px; height: 40px; margin: 28px 0 0 3px; }
.gitlogo b { font: 700 38px/40px "Noto Serif", "Liberation Serif", serif; margin-top: -5px; }
.testrow > svg { margin: 2px 0 0 18px; }
.fails { padding-left: 80px; }
.testrow { margin-bottom: 0; }
h2 { font-size: 43px; font-weight: 650; line-height: 62px; letter-spacing: -1.3px; margin-left: -2px; }
.modules { display: grid; grid-template-columns: 44px 371px auto; grid-auto-rows: 50px; align-items: center; margin-top: 50px; }
.modules svg { margin-left: 4px; margin-top: 4px; }
footer { display: flex; justify-content: flex-end; gap: 85px; margin: 97px 2px 0 0; font-weight: 500; letter-spacing: -.1px; }

/* Dock */
.dock {
  position: absolute;
  left: 86px;
  top: 1664px;
  width: 2708px;
  height: 126px;
  padding-left: 17px;
  display: flex;
  border: 2px solid #7c5a2c;
  border-radius: 36px;
  background: linear-gradient(#563a12, #6b4612);
  box-shadow: 0 0 0 1px rgba(20, 10, 0, .6), 0 0 90px rgba(0, 0, 0, .22);
  z-index: 5;
}
.app { position: relative; flex: none; width: 78px; padding-top: 17px; margin-right: 26px; }
.app svg { width: 78px; height: 78px; }
.app text { font-family: Inter, sans-serif; }
.run::after { content: ""; position: absolute; left: 35px; top: 112px; width: 8px; height: 8px; border-radius: 50%; background: #e9c48f; }
.split { flex: none; width: 2px; height: 94px; margin: 14px 32px 0 12px; background: #8d6c3c; }
.split.wide { margin-right: 34px; }
.badge {
  position: absolute;
  left: 45px;
  top: 7px;
  width: 46px;
  height: 38px;
  border-radius: 19px;
  background: #dd4b3e;
  color: #fff;
  font-size: 20px;
  font-weight: 400;
  line-height: 38px;
  text-align: center;
}
```
